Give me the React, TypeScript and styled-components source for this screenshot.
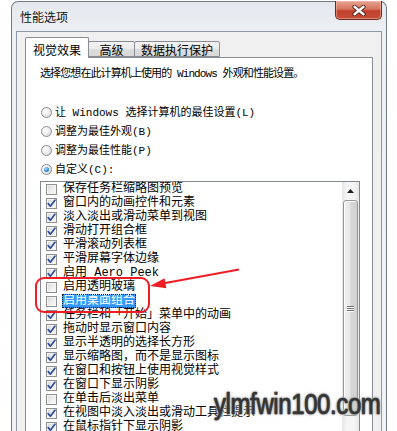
import React from "react";
import styled, { createGlobalStyle } from "styled-components";

const Global = createGlobalStyle`
  html, body { margin: 0; padding: 0; background: #ffffff; overflow: hidden; }
  body { width: 397px; height: 431px; font-family: "Liberation Mono", "Noto Sans CJK SC", monospace; color: #000; }
  * { box-sizing: border-box; }
`;

const Stage = styled.div`
  position: relative;
  width: 397px;
  height: 431px;
  overflow: hidden;
  background: #ffffff;
  padding: 1px 0 0 11px;
`;

const Window = styled.div`
  width: 376px;
  height: 480px;
  border: 1px solid #6f7b88;
  border-bottom: none;
  border-radius: 7px 7px 0 0;
  background: linear-gradient(to bottom, #e3e8ee 0px, #edf0f4 30px, #f1f3f5 100%);
  padding: 0 4px;
  display: flex;
  flex-direction: column;
`;

const TitleBar = styled.div`
  height: 29px;
  display: flex;
  align-items: flex-start;
  justify-content: space-between;
`;

const Title = styled.div`
  margin: 7px 0 0 4px;
  font: 12px/16px "Noto Sans CJK SC", sans-serif;
  color: #111;
  text-shadow: 0 0 6px rgba(255, 255, 255, 0.9);
`;

const CloseButton = styled.div`
  width: 47px;
  height: 19px;
  margin-top: -1px;
  border: 1px solid #6b2a22;
  border-top: none;
  border-radius: 0 0 5px 5px;
  background: linear-gradient(to bottom, #e7a593 0%, #d6735f 45%, #c2402c 55%, #c54f36 100%);
  box-shadow: inset 0 0 0 1px rgba(255, 200, 190, 0.45);
  display: flex;
  align-items: center;
  justify-content: center;
`;

const Client = styled.div`
  flex: 1;
  border: 1px solid #8d98a5;
  border-bottom: none;
  background: #f0f0f0;
  padding: 5px 8px 0 8px;
  display: flex;
  flex-direction: column;
`;

const TabRow = styled.div`
  height: 20px;
  display: flex;
  align-items: flex-end;
  position: relative;
  z-index: 2;
`;

const Tab = styled.div<{ $active?: boolean; $w: number }>`
  width: ${(p) => p.$w}px;
  height: ${(p) => (p.$active ? 21 : 16)}px;
  margin-bottom: ${(p) => (p.$active ? -1 : 0)}px;
  margin-left: -1px;
  &:first-child { margin-left: 0; }
  border: 1px solid #898c95;
  border-bottom: ${(p) => (p.$active ? "none" : "1px solid #898c95")};
  border-radius: 2px 2px 0 0;
  background: ${(p) =>
    p.$active ? "#ffffff" : "linear-gradient(to bottom, #f3f3f3 0%, #ebebeb 50%, #dddddd 51%, #d8d8d8 100%)"};
  position: relative;
  z-index: ${(p) => (p.$active ? 2 : 1)};
  display: flex;
  align-items: ${(p) => (p.$active ? "flex-start" : "center")};
  padding-top: ${(p) => (p.$active ? 5 : 1)}px;
  justify-content: center;
  font: 12px/14px "Noto Sans CJK SC", sans-serif;
  color: #000;
`;

const Page = styled.div`
  flex: 1;
  border: 1px solid #898c95;
  background: #ffffff;
  padding: 9px 0 0 14px;
  display: flex;
  flex-direction: column;
`;

const Intro = styled.div`
  font-size: 11px;
  line-height: 14px;
  letter-spacing: -0.9px;
  white-space: nowrap;
`;

const RadioGroup = styled.div`
  margin-top: 22px;
  display: flex;
  flex-direction: column;
`;

const RadioRow = styled.div`
  height: 19px;
  display: flex;
  align-items: center;
  padding-left: 1px;
  gap: 2px;
  font-size: 11px;
  line-height: 14px;
  white-space: nowrap;
`;

const RadioDot = styled.span<{ $on?: boolean }>`
  width: 11px;
  height: 11px;
  border-radius: 50%;
  border: 1px solid #8c8f94;
  background: radial-gradient(circle at 35% 35%, #ffffff 0%, #f0f0f0 40%, #cfd2d6 100%);
  display: flex;
  align-items: center;
  justify-content: center;
  margin-right: 1px;
  &::after {
    content: "";
    display: ${(p) => (p.$on ? "block" : "none")};
    width: 5px;
    height: 5px;
    border-radius: 50%;
    background: radial-gradient(circle at 40% 35%, #b9e4ff 0%, #3b8fd6 50%, #174f8f 100%);
  }
`;

const ListBox = styled.div`
  margin-top: 2px;
  width: 320px;
  height: 270px;
  border: 1px solid #828790;
  display: flex;
  background: #ffffff;
`;

const Items = styled.div`
  flex: 1;
  display: flex;
  flex-direction: column;
`;

const ItemRow = styled.div`
  height: 14px;
  display: flex;
  align-items: center;
  padding-left: 5px;
  font-size: 12px;
  line-height: 14px;
  white-space: nowrap;
`;

const Box = styled.span`
  width: 11px;
  height: 11px;
  border: 1px solid #8f8f8f;
  background: linear-gradient(135deg, #d6d6d6 0%, #eeeeee 55%, #fbfbfb 100%);
  box-shadow: inset 0 0 0 1px #f4f4f4;
  display: flex;
  align-items: center;
  justify-content: center;
  flex: none;
`;

const Label = styled.span<{ $sel?: boolean }>`
  margin-left: 5px;
  padding: 0 1px;
  height: 14px;
  display: flex;
  align-items: center;
  background: ${(p) => (p.$sel ? "#3399ff" : "transparent")};
  color: ${(p) => (p.$sel ? "#ffffff" : "#000000")};
  outline: ${(p) => (p.$sel ? "1px dotted #1a1a1a" : "none")};
  outline-offset: -1px;
`;

const ScrollBar = styled.div`
  width: 17px;
  display: flex;
  flex-direction: column;
  background: linear-gradient(to right, #e6e6e6 0%, #f5f5f5 30%, #f5f5f5 70%, #e6e6e6 100%);
`;

const ScrollUp = styled.div`
  height: 18px;
  display: flex;
  align-items: center;
  justify-content: center;
`;

const Thumb = styled.div`
  margin: 0 1px;
  height: 216px;
  border: 1px solid #979797;
  border-radius: 3px;
  background: linear-gradient(to right, #f2f2f2 0%, #e6e6e6 45%, #d6d6d6 55%, #cfcfcf 100%);
  box-shadow: inset 1px 1px 0 #ffffff;
  display: flex;
  align-items: center;
  justify-content: center;
`;

const Grip = styled.div`
  width: 7px;
  display: flex;
  flex-direction: column;
  gap: 1px;
  span {
    height: 1px;
    background: #6f6f6f;
    box-shadow: 0 1px 0 #ffffff;
  }
`;

const Overlay = styled.svg`
  position: absolute;
  left: 0;
  top: 0;
  pointer-events: none;
`;

const Watermark = styled.div`
  position: absolute;
  left: 214px;
  top: 389px;
  font: 30px/30px "Liberation Sans", Arial, sans-serif;
  letter-spacing: -0.5px;
  color: #353535;
  transform: scaleX(0.8);
  transform-origin: left center;
  white-space: nowrap;
  -webkit-text-stroke: 0.6px #353535;
  text-shadow: 0 0 1px #5a5a5a, 0 0 2px #8a8a8a, 0 0 3px #a8a8a8, 0 0 4px #c8c8c8;
`;

const Check = () => (
  <svg width="9" height="9" viewBox="0 0 9 9">
    <path d="M1.2 4.6 L3.4 7.2 L7.9 1.2" fill="none" stroke="#2d4c9a" strokeWidth="1.7" strokeLinecap="round" strokeLinejoin="round" />
  </svg>
);

const items: { t: string; c: boolean; sel?: boolean }[] = [
  { t: "保存任务栏缩略图预览", c: false },
  { t: "窗口内的动画控件和元素", c: true },
  { t: "淡入淡出或滑动菜单到视图", c: true },
  { t: "滑动打开组合框", c: true },
  { t: "平滑滚动列表框", c: true },
  { t: "平滑屏幕字体边缘", c: true },
  { t: "启用 Aero Peek", c: true },
  { t: "启用透明玻璃", c: false },
  { t: "启用桌面组合", c: false, sel: true },
  { t: "任务栏和「开始」菜单中的动画", c: true },
  { t: "拖动时显示窗口内容", c: true },
  { t: "显示半透明的选择长方形", c: true },
  { t: "显示缩略图，而不是显示图标", c: true },
  { t: "在窗口和按钮上使用视觉样式", c: true },
  { t: "在窗口下显示阴影", c: true },
  { t: "在单击后淡出菜单", c: false },
  { t: "在视图中淡入淡出或滑动工具栏提示", c: true },
  { t: "在鼠标指针下显示阴影", c: true },
];

const radios = [
  { t: "让 Windows 选择计算机的最佳设置(L)", on: false },
  { t: "调整为最佳外观(B)", on: false },
  { t: "调整为最佳性能(P)", on: false },
  { t: "自定义(C):", on: true },
];

export default function App() {
  return (
    <>
      <Global />
      <Stage>
        <Window>
          <TitleBar>
            <Title>性能选项</Title>
            <CloseButton>
              <svg width="14" height="11" viewBox="0 0 14 11">
                <path d="M2.5 1.8 L11.5 9.2 M11.5 1.8 L2.5 9.2" stroke="#4a1e16" strokeWidth="4.2" strokeLinecap="round" />
                <path d="M2.5 1.8 L11.5 9.2 M11.5 1.8 L2.5 9.2" stroke="#ffffff" strokeWidth="2.4" strokeLinecap="round" />
              </svg>
            </CloseButton>
          </TitleBar>
          <Client>
            <TabRow>
              <Tab $active $w={64}>视觉效果</Tab>
              <Tab $w={47}>高级</Tab>
              <Tab $w={86}>数据执行保护</Tab>
            </TabRow>
            <Page>
              <Intro>选择您想在此计算机上使用的 Windows 外观和性能设置。</Intro>
              <RadioGroup>
                {radios.map((r) => (
                  <RadioRow key={r.t}>
                    <RadioDot $on={r.on} />
                    {r.t}
                  </RadioRow>
                ))}
              </RadioGroup>
              <ListBox>
                <Items>
                  {items.map((it) => (
                    <ItemRow key={it.t}>
                      <Box>{it.c ? <Check /> : null}</Box>
                      <Label $sel={it.sel}>{it.t}</Label>
                    </ItemRow>
                  ))}
                </Items>
                <ScrollBar>
                  <ScrollUp>
                    <svg width="7" height="4" viewBox="0 0 7 4">
                      <path d="M0 4 L3.5 0 L7 4 Z" fill="#1f1f1f" />
                    </svg>
                  </ScrollUp>
                  <Thumb>
                    <Grip>
                      <span />
                      <span />
                      <span />
                    </Grip>
                  </Thumb>
                </ScrollBar>
              </ListBox>
            </Page>
          </Client>
        </Window>
        <Overlay width="397" height="431" viewBox="0 0 397 431">
          <rect x="36" y="278" width="113" height="34" rx="8" ry="8" fill="none" stroke="#ee1c24" strokeWidth="2" />
          <path d="M239 269.5 L164 283.3" stroke="#ee1c24" strokeWidth="2" fill="none" />
          <polygon points="150,286 164.5,278.3 166.4,288.2" fill="#ee1c24" />
        </Overlay>
        <Watermark>ylmfwin100.com</Watermark>
      </Stage>
    </>
  );
}
